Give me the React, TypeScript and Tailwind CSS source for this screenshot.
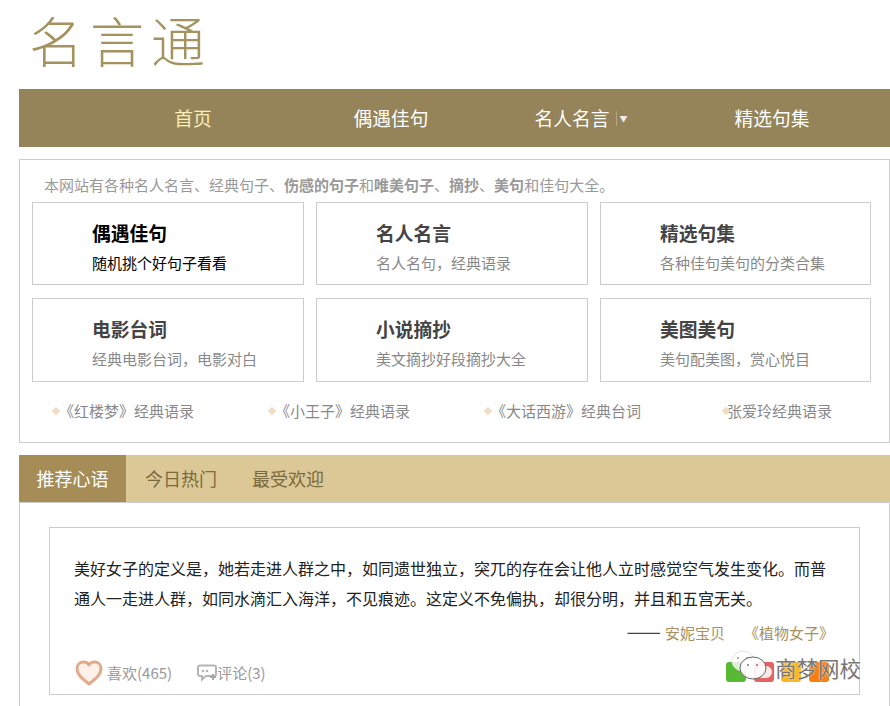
const font = { fontFamily: '"Noto Sans CJK SC", "Noto Sans", sans-serif' };

const navItems = [
  { label: "首页", width: "w-[198px]", color: "text-[#fbeeb8]" },
  { label: "偶遇佳句", width: "w-[198px]", color: "text-white" },
  { label: "名人名言", width: "w-[182px]", color: "text-white", dropdown: true },
  { label: "精选句集", width: "w-[200px]", color: "text-white" },
];

const cards = [
  { title: "偶遇佳句", sub: "随机挑个好句子看看", active: true },
  { title: "名人名言", sub: "名人名句，经典语录" },
  { title: "精选句集", sub: "各种佳句美句的分类合集" },
  { title: "电影台词", sub: "经典电影台词，电影对白" },
  { title: "小说摘抄", sub: "美文摘抄好段摘抄大全" },
  { title: "美图美句", sub: "美句配美图，赏心悦目" },
];

const links = [
  { label: "《红楼梦》经典语录", width: "w-[216px]", gap: "ml-0" },
  { label: "《小王子》经典语录", width: "w-[216px]", gap: "ml-0" },
  { label: "《大话西游》经典台词", width: "w-[238px]", gap: "ml-0" },
  { label: "张爱玲经典语录", width: "w-[149px]", gap: "-ml-[2px]" },
];

function HeartIcon() {
  return (
    <svg className="blur-[0.5px]" width="28" height="26" viewBox="0 0 28 26">
      <path
        d="M14 24C8 19 2 15 2 8.500C2 4.500 5 2 8.500 2C11 2 13 3.200 14 5C15 3.200 17 2 19.500 2C23 2 26 4.500 26 8.500C26 15 20 19 14 24Z"
        fill="#fdf1ea"
        stroke="#e3a98c"
        strokeWidth="3"
        strokeLinejoin="round"
      />
    </svg>
  );
}

function CommentIcon() {
  return (
    <svg width="20" height="18" viewBox="0 0 20 18">
      <path
        d="M3 1.500H17C18 1.500 19 2.500 19 3.500V10C19 11 18 12 17 12H9L5 15.500V12H3C2 12 1 11 1 10V3.500C1 2.500 2 1.500 3 1.500Z"
        fill="#ffffff"
        stroke="#b5b5b5"
        strokeWidth="2"
      />
      <circle cx="6" cy="7" r="1.300" fill="#b5b5b5" />
      <circle cx="10" cy="7" r="1.300" fill="#b5b5b5" />
      <path d="M13 13H19M16 10V16" stroke="#a8a8a8" strokeWidth="2" />
    </svg>
  );
}

function Watermark() {
  return (
    <div className="absolute left-[726px] top-[650px] h-[36px] w-[140px]">
      <div className="absolute left-0 top-[12px] h-5 w-5 rounded-[3px] bg-[#58b935]" />
      <div className="absolute left-[28px] top-[12px] flex h-5 w-5 items-center justify-center rounded-[3px] bg-[#e46464]">
        <div className="h-3 w-4 rounded-full bg-[#fde8e8]" />
      </div>
      <div className="absolute left-[55px] top-[12px] h-5 w-5 rounded-[3px] bg-[#fbb51e]" />
      <div className="absolute left-[83px] top-[12px] h-5 w-5 rounded-[3px] bg-[#f77f11]" />
      <svg className="absolute left-[4px] top-0" width="46" height="36" viewBox="0 0 46 36">
        <ellipse cx="13" cy="11" rx="11" ry="10" fill="#ffffff" fillOpacity="0.8" stroke="#e4e4e4" />
        <circle cx="8" cy="8" r="1" fill="#999999" />
        <circle cx="17" cy="8" r="1" fill="#999999" />
        <ellipse cx="23" cy="18" rx="13" ry="11" fill="#ffffff" fillOpacity="0.9" stroke="#666666" />
        <circle cx="18" cy="15" r="1" fill="#777777" />
        <circle cx="27" cy="15" r="1" fill="#777777" />
      </svg>
      <span className="absolute left-[49px] top-[5px] whitespace-nowrap text-[21.500px] leading-[26px] text-[#777777] [text-shadow:0_0_2px_#ffffff]">
        商梦网校
      </span>
    </div>
  );
}

export default function App() {
  return (
    <div className="relative h-[706px] w-[890px] overflow-hidden bg-white pl-[19px]" style={font}>
      {/* logo */}
      <div className="flex h-[89px] items-start pl-[10px] pt-[7px]">
        <span className="text-[54px] font-light leading-[66px] tracking-[7px] text-[#a4935f]">名言通</span>
      </div>

      {/* nav */}
      <div className="flex h-[58px] items-center bg-[#95845a] pl-[75px] text-[18.750px]">
        {navItems.map((item) => (
          <div key={item.label} className={`flex shrink-0 items-center justify-center ${item.width} ${item.color}`}>
            <span>{item.label}</span>
            {item.dropdown && (
              <span className="ml-[6px] flex items-center border-l border-[#b5a682] pl-[3px] text-[8px] leading-[15px] text-[#eeeeee]">
                ▼
              </span>
            )}
          </div>
        ))}
      </div>

      {/* intro box */}
      <div className="mt-3 h-[284px] w-[871px] border border-[#cccccc] pl-3 pr-[17px]">
        <p className="h-[42px] pl-3 pt-[13px] text-[15px] leading-[24px] text-[#999999]">
          本网站有各种名人名言、经典句子、<b className="text-[#999999]">伤感的句子</b>和
          <b className="text-[#999999]">唯美句子</b>、<b className="text-[#999999]">摘抄</b>、
          <b className="text-[#999999]">美句</b>和佳句大全。
        </p>
        <div className="grid grid-cols-[272px_272px_271px] grid-rows-[83px_84px] gap-x-3 gap-y-[13px]">
          {cards.map((card) => (
            <div key={card.title} className="border border-[#cccccc] pl-[59px] pt-[13px]">
              <div
                className={`text-[18.750px] font-bold leading-[34px] ${card.active ? "text-black" : "text-[#444444]"}`}
              >
                {card.title}
              </div>
              <div className={`pt-px text-[15px] leading-[24px] ${card.active ? "text-black" : "text-[#888888]"}`}>
                {card.sub}
              </div>
            </div>
          ))}
        </div>
        <div className="flex pl-[21px] pt-[17px]">
          {links.map((link) => (
            <div key={link.label} className={`flex shrink-0 items-center ${link.width}`}>
              <span className="h-[6px] w-[6px] shrink-0 rotate-45 bg-[#eedfc4]" />
              <span className={`${link.gap} whitespace-nowrap text-[15px] leading-[24px] text-[#888888]`}>
                {link.label}
              </span>
            </div>
          ))}
        </div>
      </div>

      {/* tabs */}
      <div className="mt-3 flex h-[48px] w-[871px] items-stretch border-b border-[#cccccc] bg-[#dcc896] text-[18px]">
        <div className="flex w-[107px] items-center justify-center bg-[#a68d58] text-white">推荐心语</div>
        <div className="flex items-center pl-[19px] text-[#7b6a3c]">今日热门</div>
        <div className="flex items-center pl-[35px] text-[#7b6a3c]">最受欢迎</div>
      </div>

      {/* recommended quote */}
      <div className="h-[220px] w-[871px] border-x border-[#cccccc] pl-[29px] pt-6">
        <div className="h-[168px] w-[811px] border border-[#cccccc] px-6 pt-[25px]">
          <p className="text-[16px] leading-[30px] text-[#222222]">
            美好女子的定义是，她若走进人群之中，如同遗世独立，突兀的存在会让他人立时感觉空气发生变化。而普通人一走进人群，如同水滴汇入海洋，不见痕迹。这定义不免偏执，却很分明，并且和五宫无关。
          </p>
          <div className="mt-[5px] flex items-baseline justify-end pr-px text-[15px] leading-[24px] text-[#a89060]">
            <span className="text-[20.500px] leading-[24px] text-[#444444]">——</span>
            <span className="ml-1">安妮宝贝</span>
            <span className="ml-[19px]">《植物女子》</span>
          </div>
          <div className="mt-[15px] flex items-center pl-px text-[15px] leading-[24px] text-[#999999]">
            <HeartIcon />
            <span className="ml-1">喜欢(465)</span>
            <span className="ml-[25px]">
              <CommentIcon />
            </span>
            <span>评论(3)</span>
          </div>
        </div>
      </div>

      <Watermark />
    </div>
  );
}
